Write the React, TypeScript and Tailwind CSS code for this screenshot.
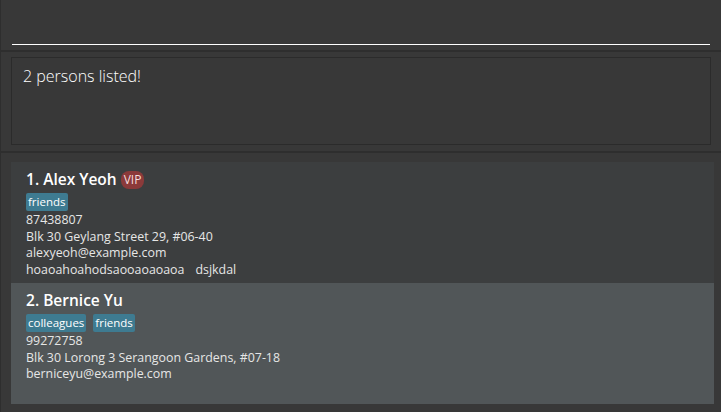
import React from 'react';

interface Person {
  name: string;
  vip?: boolean;
  tags: string[];
  phone: string;
  address: string;
  email: string;
  extra?: string[];
}

const persons: Person[] = [
  {
    name: 'Alex Yeoh',
    vip: true,
    tags: ['friends'],
    phone: '87438807',
    address: 'Blk 30 Geylang Street 29, #06-40',
    email: 'alexyeoh@example.com',
    extra: ['hoaoahoahodsaooaoaoaoa', 'dsjkdal'],
  },
  {
    name: 'Bernice Yu',
    tags: ['colleagues', 'friends'],
    phone: '99272758',
    address: 'Blk 30 Lorong 3 Serangoon Gardens, #07-18',
    email: 'berniceyu@example.com',
  },
];

const PersonCard: React.FC<{ person: Person; index: number }> = ({ person, index }) => {
  const bg = index % 2 === 0 ? 'bg-[#3c3e3f]' : 'bg-[#515658]';
  return (
    <div className={`${bg} h-[121px] pl-[15px] pt-[6px]`}>
      <div className="flex items-center h-[24px] gap-[4px]">
        <span className="text-[15.5px] font-semibold text-white">
          {index + 1}. {person.name}
        </span>
        {person.vip && (
          <span className="h-[18px] px-[3px] rounded-[8px] bg-[#8b3a3a] text-[12px] leading-[18px] text-[#f5dede]">VIP</span>
        )}
      </div>
      <div className="flex gap-[7px] mt-[1px] h-[18px]">
        {person.tags.map(t => (
          <span key={t} className="bg-[#3e7b91] rounded-[2px] px-[2px] text-[11.5px] leading-[18px] text-white">
            {t}
          </span>
        ))}
      </div>
      <div className="text-[12.4px] leading-[16.7px] text-[#e6e6e6] mt-[1px]">
        <div>{person.phone}</div>
        <div>{person.address}</div>
        <div>{person.email}</div>
        {person.extra && (
          <div className="flex gap-[11px]">
            {person.extra.map(e => (
              <span key={e}>{e}</span>
            ))}
          </div>
        )}
      </div>
    </div>
  );
};

export default function App() {
  return (
    <div
      className="w-[721px] h-[412px] bg-[#383838] flex flex-col border-l border-[#2e2e2e] overflow-hidden"
      style={{ fontFamily: '"Open Sans", "Noto Sans", sans-serif' }}
    >
      {/* command box */}
      <div className="h-[50px] px-[11px] flex items-end pb-[5px]">
        <div className="w-full h-[1px] bg-white" />
      </div>
      <div className="h-[2px] bg-[#2e2e2e]" />

      {/* result display */}
      <div className="h-[99px] px-[10px] pt-[5px]">
        <div className="h-[88px] border border-[#2b2b2b] px-[11px] pt-[6px]">
          <span className="text-[16px] font-light text-white">2 persons listed!</span>
        </div>
      </div>
      <div className="h-[2px] bg-[#2e2e2e]" />

      {/* person list */}
      <div className="flex-1 pl-[10px] pr-[7px] pt-[9px]">
        {persons.map((p, i) => (
          <PersonCard key={p.name} person={p} index={i} />
        ))}
      </div>
    </div>
  );
}
